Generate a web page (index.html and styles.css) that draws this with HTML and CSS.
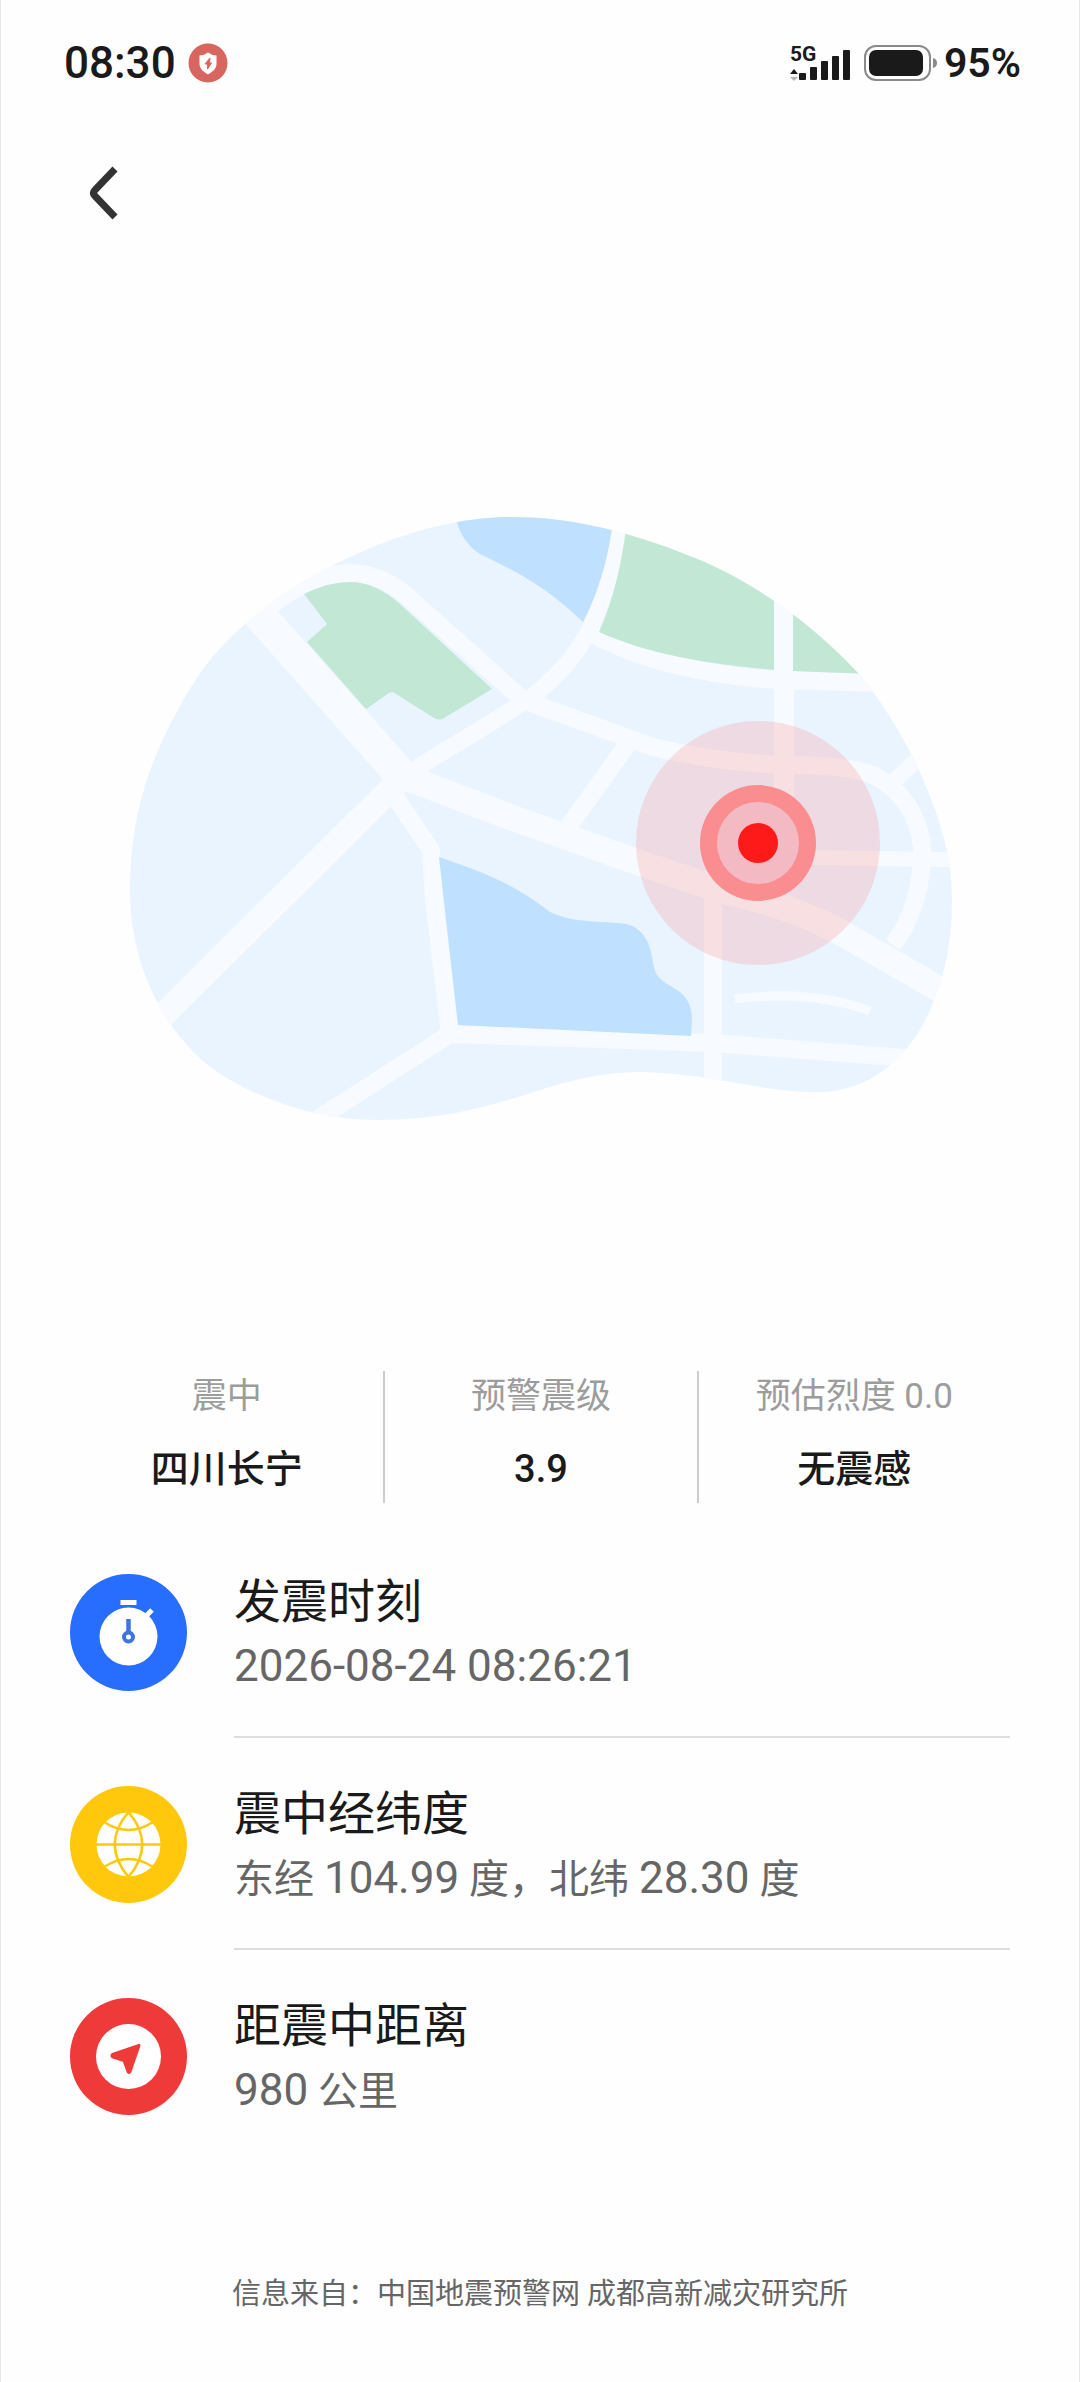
FILE: index.html
```
<!DOCTYPE html>
<html lang="zh-CN">
<head>
    <meta charset="UTF-8">
    <meta name="viewport" content="width=device-width, initial-scale=1.0">
    <title>地震预警详情</title>
    <link rel="stylesheet" href="styles.css">
</head>
<body>

    <!-- Status bar -->
    <div class="status-bar">
        <div class="status-left">
            <span class="time">08:30</span>
            <svg class="badge" viewBox="0 0 40 40" aria-hidden="true">
                <circle cx="20" cy="20" r="19.5" fill="#d96560"/>
                <path d="M20 9.500q4 3 8.500 3v9q0 5-8.500 10q-8.500-5-8.500-10v-9q4.500 0 8.500-3z" fill="#fff"/>
                <path d="M22 15l-5 6h2.500v5l4-6h-2z" fill="#d96560" stroke="#d96560"/>
            </svg>
        </div>
        <div class="status-right">
            <svg class="signal" viewBox="0 0 60 40" aria-hidden="true">
                <text x="0" y="18" class="network">5G</text>
                <path d="M4 26l4 5h-8z" fill="#1a1a1a"/>
                <path d="M4 38l4-4h-8z" fill="#b5b5b5"/>
                <g fill="#1a1a1a">
                    <rect x="9" y="30" width="7" height="7" rx="1"/>
                    <rect x="20" y="24" width="7" height="13" rx="1"/>
                    <rect x="31" y="18" width="7" height="19" rx="1"/>
                    <rect x="42" y="13" width="7" height="24" rx="1"/>
                    <rect x="53" y="7" width="7" height="30" rx="1"/>
                </g>
            </svg>
            <svg class="battery" viewBox="0 0 74 40" aria-hidden="true">
                <rect x="1" y="3" width="65" height="34" rx="11" fill="none" stroke="#8a8a8a" stroke-width="2"/>
                <rect x="5" y="7" width="54" height="26" rx="7" fill="#1a1a1a"/>
                <path d="M69 15q4 1 4 5t-4 5z" fill="#8a8a8a"/>
            </svg>
            <span class="percent">95%</span>
        </div>
    </div>

    <div class="nav">
        <button class="back" type="button" aria-label="返回">
            <svg viewBox="0 0 32 56" aria-hidden="true">
                <path d="M27 4L7 25q-3 3 0 6L27 52" fill="none" stroke="#333" stroke-width="7"/>
            </svg>
        </button>
    </div>

    <!-- Epicenter map -->
    <div class="map">
        <svg viewBox="120 500 840 640" role="img" aria-label="震中位置">
            <defs>
                <clipPath id="land">
                    <path d="M130 890C130 800 160 735 200 673C245 610 330 560 400 537C440 523 480 517 510 517C580 517 640 535 707 563C770 592 820 632 859 674C905 730 937 800 949 860C957 920 948 970 930 1010C915 1045 880 1092 817 1092C760 1092 710 1073 640 1072C550 1072 500 1120 378 1120C320 1120 260 1102 210 1067C160 1027 130 960 130 890Z"/>
                </clipPath>
            </defs>
            <g clip-path="url(#land)">
                <rect x="120" y="500" width="840" height="640" fill="#e9f4ff"/>
                <!-- roads -->
                <g fill="none" stroke="#f7fafe" stroke-width="16" stroke-linejoin="round">
                    <path d="M240 593L403 777" stroke-width="33"/>
                    <path d="M400 775L510 817L640 863L727 892Q790 905 840 932L960 1001" stroke-width="26"/>
                    <path d="M403 777L150 1028" stroke-width="25"/>
                    <path d="M403 777L443 752L523 703Q570 670 591 627Q613 580 620 515" stroke-width="17"/>
                    <path d="M262 612Q310 573 350 573Q380 573 407 596L523 700L653 747Q720 763 787 765Q850 765 875 776C910 795 924 830 922 860Q919 910 893 945" stroke-width="18"/>
                    <path d="M925 752L893 782"/>
                    <path d="M591 633C640 660 710 677 783 680L880 683" stroke-width="18"/>
                    <path d="M784 580V880" stroke-width="20"/>
                    <path d="M627 745L566 830" stroke-width="18"/>
                    <path d="M392 792L431 850L434 900L450 1034" stroke-width="18"/>
                    <path d="M310 1124L450 1034L540 1037L713 1043L930 1060" stroke-width="18"/>
                    <path d="M713 890V1100" stroke-width="18"/>
                    <path d="M780 857L960 860" stroke-width="15"/>
                    <path d="M735 999Q810 989 870 1011" stroke-width="9"/>
                </g>
                <!-- water -->
                <g fill="#bfe0ff">
                    <path d="M452 500L457 522Q462 542 480 554C503 566 540 580 583 622Q604 582 612 529L616 500Z"/>
                    <path d="M439 857C470 868 510 880 550 912C580 927 623 918 636 928C655 942 650 962 657 975C668 990 692 988 692 1020L691 1036L458 1025Z"/>
                </g>
                <!-- parks -->
                <g fill="#c3e7d5">
                    <path d="M304 594Q328 582 350 582Q375 582 400 604L492 689L444 718Q440 721 434 718L396 694Q393 691 389 693L366 709L307 642L327 624Z"/>
                    <path d="M599 632Q620 585 627 520H774V670C710 664 650 655 599 632Z"/>
                    <path d="M793 590V671L870 674V590Z"/>
                </g>
            </g>
            <!-- epicenter -->
            <circle cx="758" cy="843" r="122" fill="#ff8080" fill-opacity=".22"/>
            <circle cx="758" cy="843" r="58" fill="#f98d90"/>
            <circle cx="758" cy="843" r="41" fill="#f3bac4"/>
            <circle cx="758" cy="843" r="20" fill="#ff1a1a"/>
        </svg>
    </div>

    <!-- Summary -->
    <dl class="summary">
        <div class="cell">
            <dt>震中</dt>
            <dd>四川长宁</dd>
        </div>
        <div class="cell">
            <dt>预警震级</dt>
            <dd>3.9</dd>
        </div>
        <div class="cell">
            <dt>预估烈度 0.0</dt>
            <dd>无震感</dd>
        </div>
    </dl>

    <!-- Details -->
    <div class="details">
        <div class="row">
            <svg class="icon" viewBox="0 0 117 117" aria-hidden="true">
                <circle cx="58.5" cy="58.5" r="58.5" fill="#276eff"/>
                <rect x="50.500" y="26" width="16" height="5" fill="#fff"/>
                <path d="M75 43l7-7" stroke="#fff" stroke-width="5"/>
                <circle cx="58.5" cy="62.5" r="29" fill="#fff"/>
                <path d="M58.500 45v14" stroke="#3d74e0" stroke-width="4.500"/>
                <circle cx="58.5" cy="63" r="4.500" fill="#fff" stroke="#3d74e0" stroke-width="4"/>
            </svg>
            <div class="row-body">
                <h3>发震时刻</h3>
                <p><span class="num">2026-08-24 08:26:21</span></p>
            </div>
        </div>
        <div class="row">
            <svg class="icon" viewBox="0 0 117 117" aria-hidden="true">
                <circle cx="58.5" cy="58.5" r="58.5" fill="#ffc80c"/>
                <circle cx="58.5" cy="58.5" r="32" fill="#fff"/>
                <g fill="none" stroke="#ffc80c" stroke-width="2.500">
                    <path d="M26 58.500h65"/>
                    <path d="M58.500 26Q31 58.500 58.500 91Q86 58.500 58.500 26Z"/>
                    <path d="M34 36Q58.500 52 83 36"/>
                    <path d="M34 81Q58.500 65 83 81"/>
                </g>
            </svg>
            <div class="row-body">
                <h3>震中经纬度</h3>
                <p>东经 <span class="num">104.99</span> 度，北纬 <span class="num">28.30</span> 度</p>
            </div>
        </div>
        <div class="row">
            <svg class="icon" viewBox="0 0 117 117" aria-hidden="true">
                <circle cx="58.5" cy="58.5" r="58.5" fill="#ee3b39"/>
                <circle cx="58.5" cy="58.5" r="32.500" fill="#fff"/>
                <path d="M69 47.500L42.500 56.500Q41 58 43 59L54 62.500L58 73.500Q59 75.500 60 73.500Z" fill="#ee3b39" stroke="#ee3b39" stroke-width="3" stroke-linejoin="round"/>
            </svg>
            <div class="row-body">
                <h3>距震中距离</h3>
                <p><span class="num">980</span> 公里</p>
            </div>
        </div>
    </div>

    <p class="source">信息来自：中国地震预警网 成都高新减灾研究所</p>

</body>
</html>
```
FILE: styles.css
```
* {
    box-sizing: border-box;
}
body {
    font-family: Roboto, 'Noto Sans CJK SC', sans-serif;
    margin: 0;
    min-height: 100vh;
    background: #fefefe;
    color: #1a1a1a;
    border-left: 1px solid #e8e8e8;
    border-right: 1px solid #e8e8e8;
}
svg {
    display: block;
}

/* Status bar */
.status-bar {
    display: flex;
    justify-content: space-between;
    align-items: center;
    height: 126px;
    padding: 0 58px 0 63px;
}
.status-left, .status-right {
    display: flex;
    align-items: center;
}
.time {
    font-size: 44px;
    font-weight: 500;
}
.badge {
    width: 40px;
    height: 40px;
    margin-left: 12px;
}
.signal {
    width: 60px;
    height: 40px;
    margin-right: 14px;
}
.network {
    font-size: 21px;
    font-weight: 700;
    fill: #1a1a1a;
}
.battery {
    width: 74px;
    height: 40px;
    margin-right: 6px;
}
.percent {
    font-size: 41px;
    font-weight: 600;
}

.nav {
    display: flex;
    align-items: center;
    height: 134px;
    padding: 0 87px;
}
.back {
    padding: 0;
    border: none;
    background: none;
    cursor: pointer;
}
.back svg {
    width: 32px;
    height: 56px;
}

/* Map */
.map {
    padding: 240px 119px 231px;
}
.map svg {
    width: 100%;
}

/* Summary */
.summary {
    display: grid;
    grid-template-columns: repeat(3, 1fr);
    margin: 0 69px;
    text-align: center;
}
.cell {
    height: 132px;
}
.cell + .cell {
    border-left: 2px solid #ccc;
}
.cell dt {
    font-size: 35px;
    line-height: 52px;
    color: #9c9c9c;
}
.cell dd {
    margin: 20px 0 0;
    font-size: 38px;
    line-height: 52px;
    font-weight: 500;
}

/* Details */
.details {
    padding: 23px 69px 0;
}
.row {
    display: flex;
    align-items: center;
    gap: 47px;
}
.icon {
    width: 117px;
    height: 117px;
}
.row-body {
    flex: 1;
    height: 212px;
    padding-top: 44px;
    border-bottom: 2px solid #ddd;
}
.row:last-child .row-body {
    border-bottom: none;
}
.row-body h3 {
    margin: 0;
    font-size: 47px;
    line-height: 64px;
    font-weight: 400;
}
.row-body p {
    margin: 0;
    font-size: 40px;
    line-height: 64px;
    color: #666;
}
.num {
    font-size: 44px;
}

.source {
    margin: 110px 0 0;
    padding-bottom: 64px;
    font-size: 29px;
    line-height: 44px;
    text-align: center;
    color: #666;
}
```
